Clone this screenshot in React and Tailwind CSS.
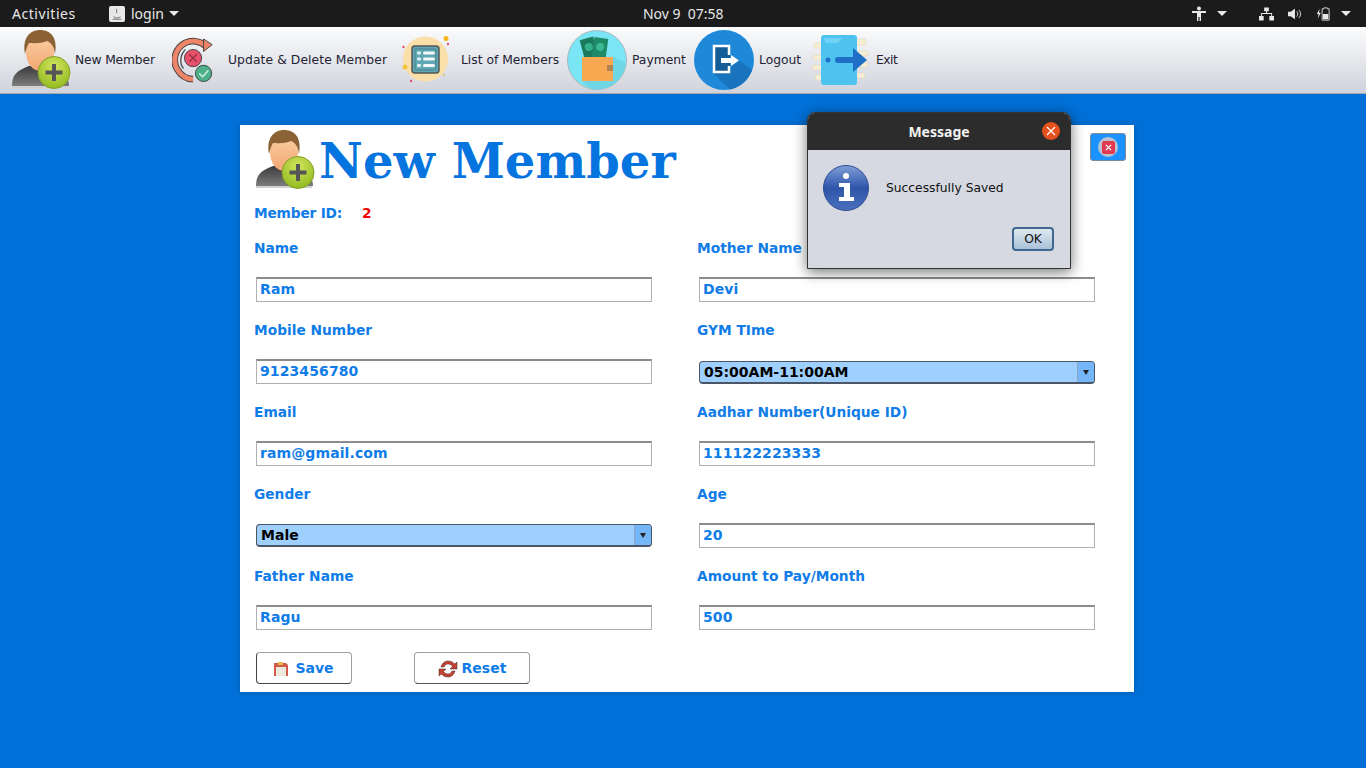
import React from "react";

const PersonAdd = ({ id, className }) => (
  <svg viewBox="0 0 60 60" className={className}>
    <defs>
      <linearGradient id={`${id}-face`} x1="0" y1="0" x2="0" y2="1">
        <stop offset="0" stopColor="#fcd0a6" />
        <stop offset="1" stopColor="#f2a672" />
      </linearGradient>
      <linearGradient id={`${id}-body`} x1="0" y1="0" x2="0" y2="1">
        <stop offset="0" stopColor="#3a3a3a" />
        <stop offset="1" stopColor="#7c7c7c" />
      </linearGradient>
      <radialGradient id={`${id}-green`} cx="0.5" cy="0.3" r="0.75">
        <stop offset="0" stopColor="#d3e45e" />
        <stop offset="1" stopColor="#8db81c" />
      </radialGradient>
    </defs>
    <path d="M1 56 C1 44 6 41 18 36 L40 36 C52 41 58 46 58 56 Z" fill={`url(#${id}-body)`} />
    <rect x="1" y="56" width="56" height="2" fill="#d0d0d0" />
    <ellipse cx="29" cy="22" rx="14" ry="19" fill={`url(#${id}-face)`} />
    <path d="M14 24 C11 8 19 0 29 0 C40 0 47 8 44 24 C43 17 41 13 36 11 C30 14 21 13 18 13 C16 16 15 20 14 24 Z" fill="#8a6236" />
    <circle cx="43" cy="42.500" r="16" fill={`url(#${id}-green)`} stroke="#86a02a" strokeWidth="1" />
    <path d="M43 34 V51 M34.500 42.500 H51.500" stroke="#555" strokeWidth="4" />
  </svg>
);

const UpdateIcon = () => (
  <svg viewBox="0 0 46 46" className="w-[44px] h-[46px]">
    <path d="M36 9 C30 3 21 2 14 5 C4 10 0 22 5 32 C9 39 15 43 22 43" fill="none" stroke="#444" strokeWidth="7" />
    <path d="M36 9 C30 3 21 2 14 5 C4 10 0 22 5 32 C9 39 15 43 22 43" fill="none" stroke="#ee8468" strokeWidth="5" />
    <path d="M33 1 L42 7 L33 14 Z" fill="#ee8468" stroke="#444" strokeWidth="1" />
    <path d="M14 12 C8 18 8 27 12 32" fill="none" stroke="#555" strokeWidth="1.500" />
    <circle cx="22" cy="21" r="9" fill="#e8516b" stroke="#444" strokeWidth="1" />
    <path d="M18 17 L26 25 M26 17 L18 25" stroke="#8c2b3a" strokeWidth="1.200" />
    <circle cx="33" cy="37" r="8.500" fill="#4cb08a" stroke="#444" strokeWidth="1" />
    <path d="M28.500 37 L32 40.500 L38 34" fill="none" stroke="#d8f0e4" strokeWidth="1.500" />
  </svg>
);

const ListIcon = () => (
  <svg viewBox="0 0 48 48" className="w-[48px] h-[48px]">
    <circle cx="23.500" cy="23" r="22.500" fill="#fbdfa8" />
    <rect x="10" y="10" width="27" height="27" rx="3" fill="#5fa8b4" stroke="#555" strokeWidth="1.500" />
    <rect x="13" y="13" width="21" height="21" rx="1" fill="none" stroke="#4a7f8a" strokeWidth="1" />
    <rect x="15" y="15.500" width="4" height="3" rx="1" fill="#dff0f0" />
    <rect x="21" y="15.500" width="12" height="3" rx="1.500" fill="#f4f8f8" />
    <rect x="15" y="21.500" width="4" height="3" rx="1" fill="#dff0f0" />
    <rect x="21" y="21.500" width="12" height="3" rx="1.500" fill="#f4f8f8" />
    <rect x="15" y="28" width="4" height="3" rx="1" fill="#dff0f0" />
    <rect x="21" y="28" width="12" height="3" rx="1.500" fill="#f4f8f8" />
    <circle cx="44" cy="2.500" r="2.500" fill="#f4b81c" />
    <circle cx="46" cy="8" r="1.200" fill="#e0506c" />
    <circle cx="3" cy="31" r="2.500" fill="#f4c63c" />
    <circle cx="1.500" cy="11" r="1.200" fill="#e0506c" />
    <circle cx="9" cy="45" r="1.200" fill="#e0506c" />
    <circle cx="42" cy="39" r="1.200" fill="#e0c080" />
  </svg>
);

const WalletIcon = () => (
  <svg viewBox="0 0 60 60" className="w-[60px] h-[60px]">
    <circle cx="30" cy="30" r="29.500" fill="#7ae6f5" stroke="#a8b8bc" strokeWidth="1" />
    <path d="M46 27 L59 33 A29.500 29.500 0 0 1 24 59 L15 51 Z" fill="#6fd6e6" />
    <g transform="rotate(-15 22 18)">
      <rect x="15" y="8" width="14" height="20" fill="#1c7a5c" />
      <circle cx="22" cy="17" r="4" fill="#34b088" />
    </g>
    <g transform="rotate(8 33 18)">
      <rect x="26" y="8" width="14" height="20" fill="#1f8a68" />
      <circle cx="33" cy="17" r="4" fill="#3cb892" />
    </g>
    <path d="M15 27 H46 V51 L15 51 Z" fill="#f7a850" />
    <rect x="40" y="35" width="6" height="6" fill="#b08450" />
  </svg>
);

const LogoutIcon = () => (
  <svg viewBox="0 0 60 60" className="w-[60px] h-[60px]">
    <circle cx="30" cy="30" r="30" fill="#1e88d9" />
    <path d="M19 43 L36 59.500 A30 30 0 0 0 58 40 L45 30 L36 38 V43 Z" fill="#1a74bd" />
    <rect x="19" y="15" width="17" height="28" fill="#145c96" />
    <path d="M35 25 V16 H20 V42 H35 V36" fill="none" stroke="#fff" strokeWidth="2.500" />
    <path d="M27 28 H37 V25 L45 30.500 L37 36 V33 H27 Z" fill="#fff" />
  </svg>
);

const ExitIcon = () => (
  <svg viewBox="0 0 58 50" className="w-[58px] h-[50px]">
    <g fill="#f7edd2" stroke="#d8d0b8" strokeWidth="0.500">
      <rect x="2" y="8" width="14" height="5" rx="2" />
      <rect x="1" y="20" width="14" height="5" rx="2" />
      <rect x="0" y="30" width="14" height="5" rx="2" />
      <rect x="3" y="40" width="14" height="5" rx="2" />
      <rect x="40" y="4" width="14" height="6" rx="2" />
      <rect x="42" y="16" width="14" height="5" rx="2" />
      <rect x="42" y="27" width="14" height="5" rx="2" />
      <rect x="40" y="38" width="13" height="5" rx="2" />
    </g>
    <rect x="9" y="0" width="36" height="50" rx="3" fill="#4fc3f0" />
    <path d="M12 3 H30 L26 8 H14 Z" fill="#72d2f5" />
    <circle cx="16" cy="25" r="2.500" fill="#1f6fc6" />
    <rect x="23" y="22" width="20" height="6" rx="3" fill="#1f6fc6" />
    <path d="M41 13 L55 25 L41 37 Z" fill="#1f6fc6" />
  </svg>
);

const toolbarItems = [
  { label: "New Member", icon: <PersonAdd id="tb" className="w-[60px] h-[60px]" />, box: "ml-[11px] w-[60px]", text: "ml-[4px] w-[80px] tracking-[-0.15px]" },
  { label: "Update & Delete Member", icon: <UpdateIcon />, box: "ml-[17px] w-[44px]", text: "ml-[12px] w-[159px] tracking-[0.1px]" },
  { label: "List of Members", icon: <ListIcon />, box: "ml-[15px] w-[48px]", text: "ml-[11px] w-[98px]" },
  { label: "Payment", icon: <WalletIcon />, box: "ml-[8px] w-[60px]", text: "ml-[5px] w-[54px]" },
  { label: "Logout", icon: <LogoutIcon />, box: "ml-[8px] w-[60px]", text: "ml-[5px] w-[43px]" },
  { label: "Exit", icon: <ExitIcon />, box: "ml-[10px] w-[58px]", text: "ml-[6px] w-[21px] tracking-[-0.5px]" },
];

const Caret = () => (
  <span className="w-0 h-0 border-x-[5px] border-x-transparent border-t-[5px] border-t-[#e8e8e8]" />
);

const TopBar = () => (
  <div className="h-[27px] bg-[#1b1b1b] flex items-center text-[#e8e8e8] text-[14px] font-['Noto_Sans',sans-serif] relative">
    <span className="ml-[12px] w-[97px] tracking-[0.55px]">Activities</span>
    <span className="w-[16px] h-[16px] rounded-[2px] bg-[#e8e8e8] flex items-center justify-center">
      <svg viewBox="0 0 16 16" className="w-[14px] h-[14px]">
        <path d="M7 2 C9 4 6 5 8 7 M4 11 C6 13 10 13 12 11 M3 14 H13" fill="none" stroke="#666" strokeWidth="1" />
      </svg>
    </span>
    <span className="ml-[6px] mr-[5px]">login</span>
    <Caret />
    <span className="ml-[464px] w-[80px] text-center whitespace-pre">Nov 9  07:58</span>
    <div className="ml-auto flex items-center mr-[15px]">
      <svg viewBox="0 0 14 16" className="w-[14px] h-[16px]" fill="#e8e8e8">
        <circle cx="7" cy="2.500" r="2" />
        <path d="M0 5 H14 V7 H9 V15 H7.600 V11 H6.400 V15 H5 V7 H0 Z" />
      </svg>
      <span className="ml-[11px] mr-[32px] flex"><Caret /></span>
      <svg viewBox="0 0 16 14" className="w-[15px] h-[14px]" fill="#e8e8e8">
        <path d="M5.500 0 H10.500 V4 H8.500 V6 H14 V9 H16 V14 H11 V9 H13 V7 H3 V9 H5 V14 H0 V9 H2 V6 H7.500 V4 H5.500 Z" />
      </svg>
      <svg viewBox="0 0 16 14" className="ml-[14px] w-[14px] h-[14px]" fill="#e8e8e8">
        <path d="M0 4.500 H3 L8 1 V13 L3 9.500 H0 Z" />
        <path d="M10 4 C11.500 6 11.500 8 10 10 M12.500 2.500 C15 5.500 15 8.500 12.500 11.500" fill="none" stroke="#e8e8e8" strokeWidth="1" />
      </svg>
      <svg viewBox="0 0 16 16" className="ml-[14px] w-[14px] h-[16px]">
        <path d="M4 2 L1 8 H3 L2 13 L5.500 6.500 H3.500 Z" fill="#e8e8e8" />
        <path d="M9 2 V1 H13 V2 H15 V15 H7 V2 Z" fill="none" stroke="#e8e8e8" strokeWidth="1" />
        <rect x="8" y="8" width="6" height="6" fill="#e8e8e8" />
      </svg>
      <span className="ml-[11px] flex"><Caret /></span>
    </div>
  </div>
);

const Toolbar = () => (
  <div className="h-[67px] flex items-center bg-gradient-to-b from-[#fbfcfc] to-[#d0d3dc] border-b border-[#a8a8a8] text-[12.3px] text-[#222233] font-['DejaVu_Sans',sans-serif]">
    {toolbarItems.map((item) => (
      <div key={item.label} className="flex items-center">
        <div className={`${item.box} flex justify-center`}>{item.icon}</div>
        <span className={`${item.text} whitespace-nowrap`}>{item.label}</span>
      </div>
    ))}
  </div>
);

const Field = ({ label, value }) => (
  <div>
    <div className="h-[20px] leading-[20px] -ml-[2px] text-[13.75px]">{label}</div>
    <div className="mt-[19px] h-[25px] border border-[#b0b0b0] border-t-[#8c8c8c] border-t-2 px-[3px] leading-[21px] tracking-[0.1px] bg-white">
      {value}
    </div>
  </div>
);

const SelectField = ({ label, value, gap }) => (
  <div>
    <div className="h-[20px] leading-[20px] -ml-[2px] text-[13.75px]">{label}</div>
    <div className={`${gap} h-[23px] rounded-[4px] border border-[#4a5666] border-b-2 bg-[#9fd0fd] text-black flex`}>
      <span className="flex-1 pl-[4px] leading-[20px]">{value}</span>
      <span className="w-[17px] bg-[#74b6f8] border-l border-[#8aa6c4] rounded-r-[3px] flex items-center justify-center">
        <span className="w-0 h-0 border-x-[3.500px] border-x-transparent border-t-[5px] border-t-[#222]" />
      </span>
    </div>
  </div>
);

const SaveIcon = () => (
  <svg viewBox="0 0 14 14" className="w-[14px] h-[14px]">
    <path d="M0 1 H12 L14 3 V14 H0 Z" fill="#d25a4a" />
    <rect x="2" y="5" width="10" height="9" fill="#ece8dc" />
    <rect x="4" y="0" width="5" height="3" fill="#e8b84c" />
  </svg>
);

const ResetIcon = () => (
  <svg viewBox="0 0 20 20" className="w-[20px] h-[20px]">
    <path d="M3 8 C4 4 7 2 10 2 C13 2 15 3 16.500 5 L19 3 V10 H12 L14.500 7.500 C13.500 6 12 5 10 5 C8 5 7 6 6 8 Z" fill="#c84030" stroke="#333" strokeWidth="0.500" />
    <path d="M17 12 C16 16 13 18 10 18 C7 18 5 17 3.500 15 L1 17 V10 H8 L5.500 12.500 C6.500 14 8 15 10 15 C12 15 13 14 14 12 Z" fill="#c84030" stroke="#333" strokeWidth="0.500" />
  </svg>
);

const MessageDialog = () => (
  <div className="absolute left-[567px] -top-[13px] w-[264px] h-[157px] rounded-t-[8px] border border-[#333] bg-[#d6d9e1] shadow-[0_3px_14px_rgba(0,0,0,0.55)] flex flex-col font-normal">
    <div className="h-[37px] bg-[#2c2c2c] rounded-t-[7px] flex items-center justify-center relative text-[#f2f2f2] text-[14px] font-bold font-['Noto_Sans',sans-serif]">
      Message
      <span className="absolute right-[10px] top-[9px] w-[18px] h-[18px] rounded-full bg-[#e4501e] flex items-center justify-center">
        <svg viewBox="0 0 10 10" className="w-[10px] h-[10px]">
          <path d="M1 1 L9 9 M9 1 L1 9" stroke="#fff" strokeWidth="1.200" />
        </svg>
      </span>
    </div>
    <div className="flex items-center mt-[15px] ml-[15px] font-['DejaVu_Sans',sans-serif] text-[12.3px] text-[#111]">
      <svg viewBox="0 0 46 46" className="w-[46px] h-[46px]">
        <defs>
          <linearGradient id="info" x1="0" y1="0" x2="0" y2="1">
            <stop offset="0" stopColor="#7f9fd8" />
            <stop offset="0.500" stopColor="#2f55aa" />
            <stop offset="1" stopColor="#4a70bc" />
          </linearGradient>
        </defs>
        <circle cx="23" cy="23" r="22.500" fill="url(#info)" stroke="#2c4c94" />
        <circle cx="23" cy="11" r="3" fill="#fff" />
        <path d="M16 18 H27 V32 H31 V36 H16 V32 H21 V22 H16 Z" fill="#fff" />
      </svg>
      <span className="ml-[17px]">Successfully Saved</span>
    </div>
    <div className="flex justify-end mt-[16px] mr-[16px]">
      <button className="w-[42px] h-[24px] pt-[1px] rounded-[4px] border-2 border-[#3f668e] bg-gradient-to-b from-[#dfe8f0] to-[#a9c2d8] font-['DejaVu_Sans',sans-serif] text-[12.3px] text-[#111]">
        OK
      </button>
    </div>
  </div>
);

const App = () => {
  return (
    <div className="w-[1366px] h-[768px] bg-[#0070d8] overflow-hidden">
      <TopBar />
      <Toolbar />
      <div className="relative mt-[31px] ml-[240px] w-[894px] h-[567px] bg-white text-[#0f7ce8] text-[14px] font-bold font-['DejaVu_Sans',sans-serif] shadow-[0_0_6px_rgba(0,0,0,0.2)]">
        <div className="flex items-center pt-[5px] pl-[15px] h-[65px]">
          <PersonAdd id="hd" className="w-[60px] h-[60px]" />
          <h1 className="ml-[4px] mt-[1px] text-[48px] leading-[60px] font-bold tracking-[0.05px] text-[#0674de] font-['DejaVu_Serif',serif]">New Member</h1>
          <button className="absolute left-[850px] top-[8px] w-[36px] h-[28px] rounded-[3px] bg-[#1c92ff] border border-[#7d8b99] flex items-center justify-center">
            <span className="w-[20px] h-[20px] rounded-full bg-[#b9c4d0] flex items-center justify-center">
              <span className="w-[13px] h-[13px] rounded-[2px] bg-[#e23a50] flex items-center justify-center">
                <svg viewBox="0 0 8 8" className="w-[7px] h-[7px]">
                  <path d="M1 1 L7 7 M7 1 L1 7" stroke="#fff" strokeWidth="1.500" />
                </svg>
              </span>
            </span>
          </button>
        </div>
        <div className="h-[20px] leading-[20px] mt-[13px] ml-[14px] flex text-[13.75px]">
          <span className="w-[88px] whitespace-nowrap tracking-[-0.2px]">Member ID:</span>
          <span className="ml-[20px] text-[#f00000]">2</span>
        </div>
        <div className="mt-[15px] pl-[16px] grid grid-cols-[396px_396px] gap-x-[47px] gap-y-[18px]">
          <Field label="Name" value="Ram" />
          <Field label="Mother Name" value="Devi" />
          <Field label="Mobile Number" value="9123456780" />
          <SelectField label="GYM TIme" value="05:00AM-11:00AM" gap="mt-[21px]" />
          <Field label="Email" value="ram@gmail.com" />
          <Field label="Aadhar Number(Unique ID)" value="111122223333" />
          <SelectField label="Gender" value="Male" gap="mt-[20px]" />
          <Field label="Age" value="20" />
          <Field label="Father Name" value="Ragu" />
          <Field label="Amount to Pay/Month" value="500" />
        </div>
        <div className="mt-[22px] ml-[16px] flex gap-[62px]">
          <button className="w-[96px] h-[32px] pt-[1px] rounded-[4px] border border-[#9aa0a8] border-b-[#444] border-l-[#444] bg-white flex items-center justify-center gap-[7px]">
            <SaveIcon /> Save
          </button>
          <button className="w-[116px] h-[32px] pt-[1px] rounded-[4px] border border-[#9aa0a8] border-b-[#555] bg-white flex items-center justify-center gap-[4px]">
            <ResetIcon /> Reset
          </button>
        </div>
        <MessageDialog />
      </div>
    </div>
  );
};

export default App;
